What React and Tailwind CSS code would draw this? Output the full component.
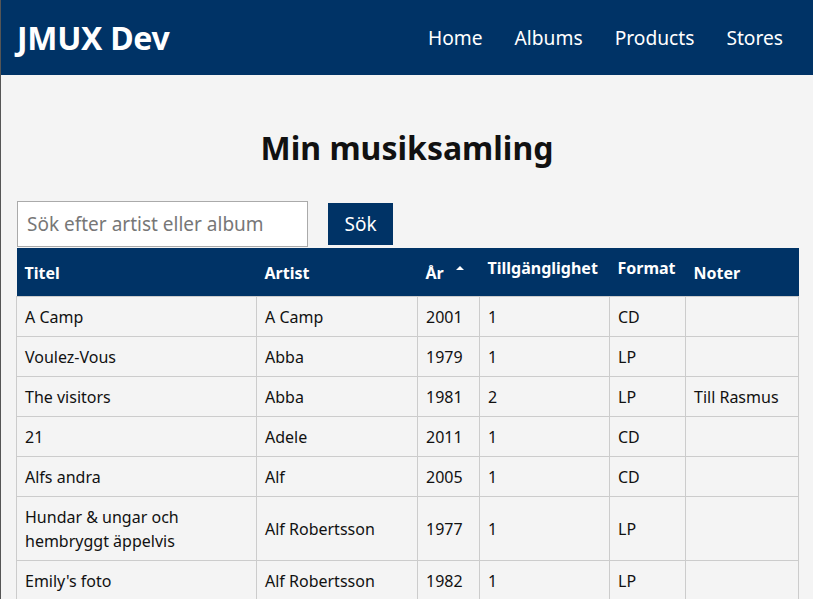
import React from "react";

const albums = [
  { title: "A Camp", artist: "A Camp", year: 2001, count: 1, format: "CD", note: "" },
  { title: "Voulez-Vous", artist: "Abba", year: 1979, count: 1, format: "LP", note: "" },
  { title: "The visitors", artist: "Abba", year: 1981, count: 2, format: "LP", note: "Till Rasmus" },
  { title: "21", artist: "Adele", year: 2011, count: 1, format: "CD", note: "" },
  { title: "Alfs andra", artist: "Alf", year: 2005, count: 1, format: "CD", note: "" },
  { title: "Hundar & ungar och hembryggt äppelvis", artist: "Alf Robertsson", year: 1977, count: 1, format: "LP", note: "" },
  { title: "Emily's foto", artist: "Alf Robertsson", year: 1982, count: 1, format: "LP", note: "" },
];

export default function App() {
  return (
    <div className="min-h-screen bg-[#f4f4f4] border-l border-[#555] font-['Noto_Sans',sans-serif] text-[#111]">
      <header className="h-[75px] bg-[#003366] flex items-center justify-between pl-[16px] pr-[30px] text-white">
        <h1 className="text-[32px] font-bold tracking-[-0.3px]">JMUX Dev</h1>
        <nav className="flex gap-[32px] text-[19.2px] pt-[2px]">
          <a>Home</a>
          <a>Albums</a>
          <a>Products</a>
          <a>Stores</a>
        </nav>
      </header>

      <main className="px-[16px]">
        <h2 className="text-center text-[32px] font-bold pt-[50px] pb-[31px] leading-[45px]">Min musiksamling</h2>

        <form className="flex items-center gap-[20px]" onSubmit={(e) => e.preventDefault()}>
          <input
            type="text"
            placeholder="Sök efter artist eller album"
            className="w-[291px] h-[46px] bg-white border border-[#aaa] px-[9px] text-[19px] placeholder:text-[#777] outline-none"
          />
          <button type="submit" className="w-[65px] h-[42px] bg-[#003366] text-white text-[19px]">Sök</button>
        </form>

        <table className="w-[783px] -ml-[1px] border-collapse text-[16px] mt-[1px]">
          <thead>
            <tr className="bg-[#003366] text-white h-[48px] text-left">
              <th className="w-[240px] pl-[8px] pt-[2px]">Titel</th>
              <th className="w-[161px] pl-[8px] pt-[2px]">Artist</th>
              <th className="w-[62px] pl-[8px] pt-[2px]">
                <span className="inline-flex items-center gap-[12px]">
                  År
                  <svg width="8" height="5" viewBox="0 0 8 5" className="-mt-[10px]"><path d="M0 5 L4 1 L8 5 Z" fill="white" /></svg>
                </span>
              </th>
              <th className="w-[130px] pl-[8px] pb-[8px]">Tillgänglighet</th>
              <th className="w-[76px] pl-[8px] pb-[8px]">Format</th>
              <th className="pl-[8px] pt-[2px]">Noter</th>
            </tr>
          </thead>
          <tbody>
            {albums.map((a) => (
              <tr key={a.title} className={a.title.length > 30 ? "h-[64px]" : "h-[40px]"}>
                <td className="border border-[#ccc] px-[8px] pt-[1px] leading-[24px]">{a.title.length > 30 ? <>Hundar &amp; ungar och<br />hembryggt äppelvis</> : a.title}</td>
                <td className="border border-[#ccc] px-[8px] pt-[1px]">{a.artist}</td>
                <td className="border border-[#ccc] px-[8px] pt-[1px]">{a.year}</td>
                <td className="border border-[#ccc] px-[8px] pt-[1px]">{a.count}</td>
                <td className="border border-[#ccc] px-[8px] pt-[1px]">{a.format}</td>
                <td className="border border-[#ccc] px-[8px] pt-[1px]">{a.note}</td>
              </tr>
            ))}
          </tbody>
        </table>
      </main>
    </div>
  );
}
